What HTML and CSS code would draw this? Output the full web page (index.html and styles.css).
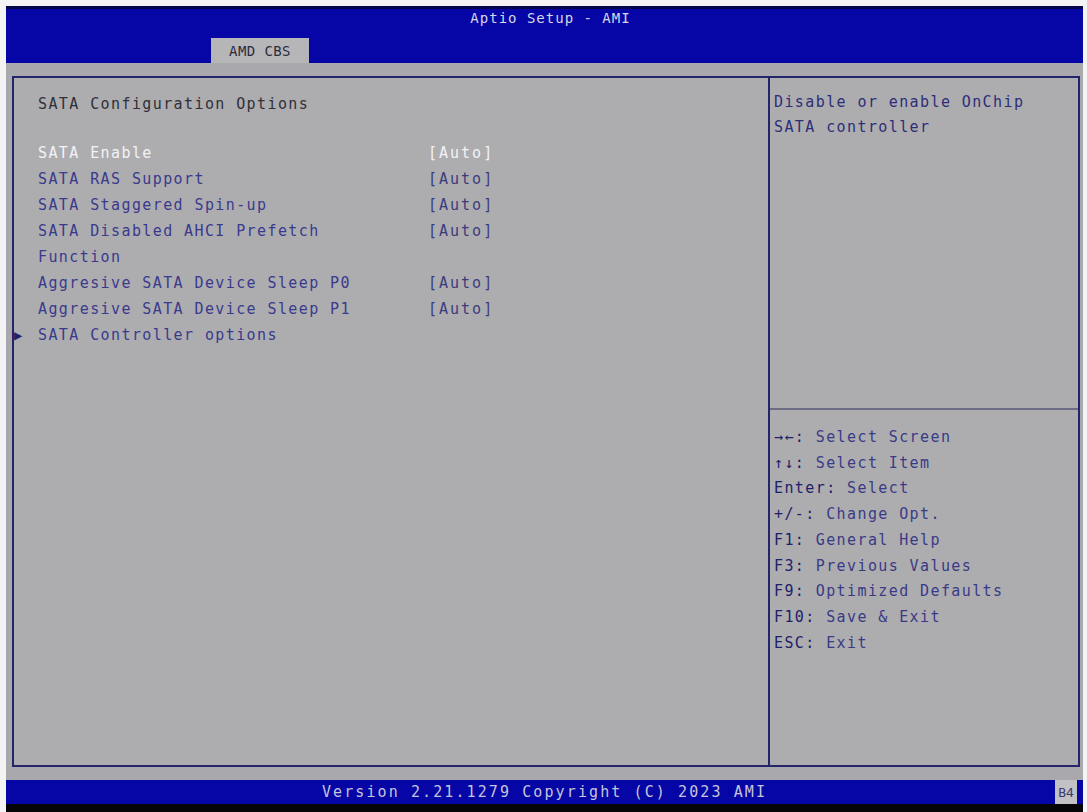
FILE: index.html
```html
<!DOCTYPE html>
<html>
<head>
  <title>Aptio Setup - AMI</title>
  <link rel="stylesheet" href="styles.css">
</head>
<body>
  <div class="screen">
    <div class="header">
      <div class="header-title">Aptio Setup - AMI</div>
      <div class="tabs">
        <div class="tab active">AMD CBS</div>
      </div>
    </div>

    <div class="main">
      <div class="frame">
        <div class="left-panel">
          <div class="section-title">SATA Configuration Options</div>
          <div class="options">
            <div class="option selected">
              <span class="label">SATA Enable</span>
              <span class="value">[Auto]</span>
            </div>
            <div class="option">
              <span class="label">SATA RAS Support</span>
              <span class="value">[Auto]</span>
            </div>
            <div class="option">
              <span class="label">SATA Staggered Spin-up</span>
              <span class="value">[Auto]</span>
            </div>
            <div class="option">
              <span class="label">SATA Disabled AHCI Prefetch<br>Function</span>
              <span class="value">[Auto]</span>
            </div>
            <div class="option">
              <span class="label">Aggresive SATA Device Sleep P0</span>
              <span class="value">[Auto]</span>
            </div>
            <div class="option">
              <span class="label">Aggresive SATA Device Sleep P1</span>
              <span class="value">[Auto]</span>
            </div>
            <div class="option submenu">
              <span class="label"><span class="arrow">&#9654;</span>SATA Controller options</span>
              <span class="value"></span>
            </div>
          </div>
        </div>

        <div class="right-panel">
          <div class="help-text">
            Disable or enable OnChip<br>
            SATA controller
          </div>
          <div class="key-list">
            <div class="key"><b>&rarr;&larr;:</b> Select Screen</div>
            <div class="key"><b>&uarr;&darr;:</b> Select Item</div>
            <div class="key"><b>Enter:</b> Select</div>
            <div class="key"><b>+/-:</b> Change Opt.</div>
            <div class="key"><b>F1:</b> General Help</div>
            <div class="key"><b>F3:</b> Previous Values</div>
            <div class="key"><b>F9:</b> Optimized Defaults</div>
            <div class="key"><b>F10:</b> Save &amp; Exit</div>
            <div class="key"><b>ESC:</b> Exit</div>
          </div>
        </div>
      </div>
    </div>

    <div class="footer">
      <div class="footer-text">Version 2.21.1279 Copyright (C) 2023 AMI</div>
      <div class="footer-code">B4</div>
    </div>
  </div>
</body>
</html>
```

FILE: styles.css
```css
body {
  margin: 0;
  background: #f4f4f4;
  font-family: "DejaVu Sans Mono", "Liberation Mono", monospace;
  font-size: 15px;
  letter-spacing: 1.4px;
}

.screen {
  margin: 6px 4px 0 6px;
}

/* header */
.header {
  height: 54px;
  border-top: 3px solid #05054a;
  background: #0606a6;
  display: flex;
  flex-direction: column;
  justify-content: space-between;
}

.header-title {
  text-align: center;
  color: #d6d6e4;
  font-size: 14px;
  letter-spacing: 1px;
  padding-top: 1px;
  padding-left: 12px;
}

.tabs {
  display: flex;
  padding-left: 205px;
}

.tab {
  width: 98px;
  height: 25px;
  line-height: 27px;
  text-align: center;
  font-size: 14px;
  letter-spacing: 0.4px;
  color: #2c2c3c;
}

.tab.active {
  background: #b6b6b8;
}

/* main area */
.main {
  background: #a9a9ad;
  padding: 13px 3px 13px 6px;
}

.frame {
  height: 687px;
  border: 2px solid #24246a;
  display: grid;
  grid-template-columns: 754px 2px 1fr;
  background: #adadb0;
}

.frame::before {
  content: "";
  grid-column: 2;
  grid-row: 1;
  background: #24246a;
}

.left-panel {
  grid-column: 1;
  grid-row: 1;
  padding: 13px 0 0 24px;
}

.section-title {
  line-height: 26px;
  color: #303038;
  margin-bottom: 23px;
}

.option {
  display: grid;
  grid-template-columns: 390px auto;
  line-height: 26px;
  color: #3a3a8c;
}

.option .value {
  color: #3c3c7c;
  letter-spacing: 2px;
}

.option.selected .label,
.option.selected .value {
  color: #f2f2f6;
}

.submenu .label {
  position: relative;
}

.arrow {
  position: absolute;
  left: -24px;
  top: 0;
  font-size: 14px;
  color: #20206a;
}

.right-panel {
  grid-column: 3;
  grid-row: 1;
  display: flex;
  flex-direction: column;
}

.help-text {
  height: 318px;
  padding: 12px 0 0 4px;
  line-height: 25px;
  color: #2e2e78;
  border-bottom: 2px solid #6c6c84;
}

.key-list {
  padding: 15px 0 0 4px;
}

.key {
  line-height: 25.7px;
  color: #3a3a86;
}

.key b {
  font-weight: normal;
  color: #20206a;
}

/* footer */
.footer {
  height: 24px;
  background: #0606a6;
  border-bottom: 8px solid #050508;
  display: flex;
  align-items: center;
}

.footer-text {
  flex: 1;
  text-align: center;
  color: #c4c4dc;
  font-size: 15px;
  letter-spacing: 2.1px;
  padding-left: 28px;
}

.footer-code {
  width: 22px;
  height: 24px;
  line-height: 26px;
  margin-right: 6px;
  background: #c2c2c6;
  color: #3a3a70;
  font-size: 13px;
  letter-spacing: 0;
  text-align: center;
}
```
